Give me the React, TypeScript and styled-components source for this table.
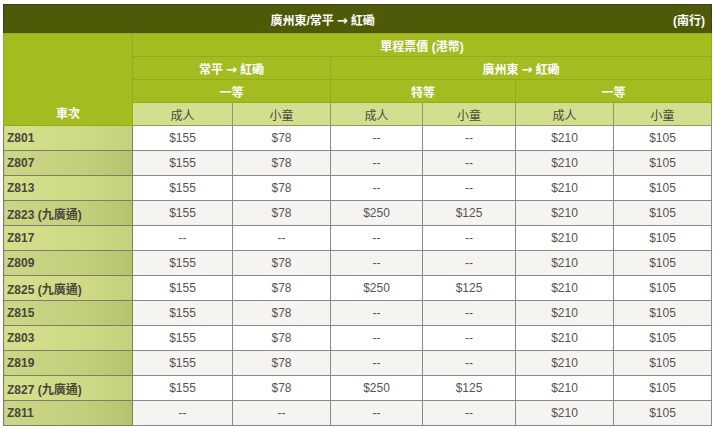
import styled, { createGlobalStyle } from "styled-components";

const GlobalStyle = createGlobalStyle`
  body {
    margin: 0;
    background: #ffffff;
    font-family: "Liberation Sans", "Noto Sans CJK TC", Arial, sans-serif;
  }
`;

const Page = styled.div`
  padding: 4px 3px 0 3px;
`;

const Table = styled.table`
  width: 708px;
  border-collapse: collapse;
  table-layout: fixed;
  border: 1px solid #3c3c2c;
  font-size: 12px;
`;

const TitleCell = styled.th`
  height: 28px;
  padding: 0;
  background: #4f5a08;
  color: #ffffff;
  font-weight: bold;
`;

const TitleBar = styled.div`
  display: flex;
  align-items: center;
`;

const TitleMain = styled.span`
  flex: 1;
  text-align: center;
`;

const TitleSide = styled.span`
  width: 70px;
  padding-right: 6px;
  box-sizing: border-box;
  text-align: right;
`;

const Arrow = styled.span`
  font-family: "DejaVu Sans", sans-serif;
  font-weight: bold;
  font-size: 13px;
  margin: 0 3px;
`;

const HeadCell = styled.th<{ $light?: boolean }>`
  height: 22px;
  padding: 0;
  background: ${(p) => (p.$light ? "#d2df8f" : "#a3bc1f")};
  color: ${(p) => (p.$light ? "#4a4a3a" : "#ffffff")};
  font-weight: ${(p) => (p.$light ? "normal" : "bold")};
  border: 1px solid ${(p) => (p.$light ? "#8f9a6a" : "#93ab1c")};
  text-align: center;
`;

const TrainHead = styled(HeadCell)`
  vertical-align: bottom;
  padding-bottom: 4px;
  color: #ffffff;
  font-weight: bold;
  background: #a3bc1f;
`;

const Row = styled.tr<{ $alt: boolean }>`
  background: ${(p) => (p.$alt ? "#f6f4f1" : "#ffffff")};
`;

const TrainCell = styled.td<{ $alt: boolean }>`
  height: 24px;
  padding: 0 0 0 3px;
  color: #47473a;
  font-weight: bold;
  border: 1px solid #7d7d6a;
  background: ${(p) =>
    p.$alt
      ? "linear-gradient(90deg, #cbd688 0%, #c3cf7b 60%, #b6c26c 100%)"
      : "linear-gradient(90deg, #d5e08c 0%, #ccd884 70%, #c4d07a 100%)"};
`;

const PriceCell = styled.td`
  height: 24px;
  padding: 0;
  color: #555555;
  text-align: center;
  border: 1px solid #8a8a8a;
`;

type Train = { id: string; prices: string[] };

const trains: Train[] = [
  { id: "Z801", prices: ["$155", "$78", "--", "--", "$210", "$105"] },
  { id: "Z807", prices: ["$155", "$78", "--", "--", "$210", "$105"] },
  { id: "Z813", prices: ["$155", "$78", "--", "--", "$210", "$105"] },
  { id: "Z823 (九廣通)", prices: ["$155", "$78", "$250", "$125", "$210", "$105"] },
  { id: "Z817", prices: ["--", "--", "--", "--", "$210", "$105"] },
  { id: "Z809", prices: ["$155", "$78", "--", "--", "$210", "$105"] },
  { id: "Z825 (九廣通)", prices: ["$155", "$78", "$250", "$125", "$210", "$105"] },
  { id: "Z815", prices: ["$155", "$78", "--", "--", "$210", "$105"] },
  { id: "Z803", prices: ["$155", "$78", "--", "--", "$210", "$105"] },
  { id: "Z819", prices: ["$155", "$78", "--", "--", "$210", "$105"] },
  { id: "Z827 (九廣通)", prices: ["$155", "$78", "$250", "$125", "$210", "$105"] },
  { id: "Z811", prices: ["--", "--", "--", "--", "$210", "$105"] },
];

const widths = [129, 100, 98, 92, 93, 98, 98];

const Route = ({ from, to }: { from: string; to: string }) => (
  <>
    {from}
    <Arrow>→</Arrow>
    {to}
  </>
);

export default function App() {
  return (
    <>
      <GlobalStyle />
      <Page>
        <Table>
          <colgroup>
            {widths.map((w, i) => (
              <col key={i} style={{ width: w }} />
            ))}
          </colgroup>
          <thead>
            <tr>
              <TitleCell colSpan={7}>
                <TitleBar>
                  <TitleMain>
                    <Route from="廣州東/常平" to="紅磡" />
                  </TitleMain>
                  <TitleSide>(南行)</TitleSide>
                </TitleBar>
              </TitleCell>
            </tr>
            <tr>
              <TrainHead rowSpan={4}>車次</TrainHead>
              <HeadCell colSpan={6}>單程票價 (港幣)</HeadCell>
            </tr>
            <tr>
              <HeadCell colSpan={2}>
                <Route from="常平" to="紅磡" />
              </HeadCell>
              <HeadCell colSpan={4}>
                <Route from="廣州東" to="紅磡" />
              </HeadCell>
            </tr>
            <tr>
              <HeadCell colSpan={2}>一等</HeadCell>
              <HeadCell colSpan={2}>特等</HeadCell>
              <HeadCell colSpan={2}>一等</HeadCell>
            </tr>
            <tr>
              {["成人", "小童", "成人", "小童", "成人", "小童"].map((t, i) => (
                <HeadCell key={i} $light>
                  {t}
                </HeadCell>
              ))}
            </tr>
          </thead>
          <tbody>
            {trains.map((t, r) => (
              <Row key={t.id} $alt={r % 2 === 1}>
                <TrainCell $alt={r % 2 === 1}>{t.id}</TrainCell>
                {t.prices.map((p, i) => (
                  <PriceCell key={i}>{p}</PriceCell>
                ))}
              </Row>
            ))}
          </tbody>
        </Table>
      </Page>
    </>
  );
}
